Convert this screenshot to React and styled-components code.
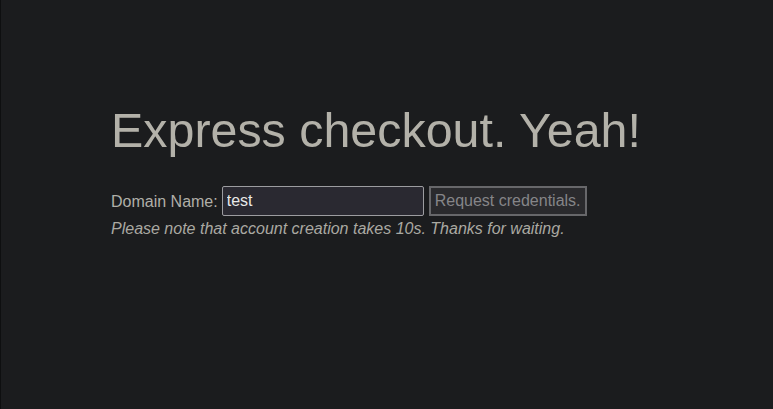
import React, { useState } from "react";
import styled, { createGlobalStyle } from "styled-components";

const GlobalStyle = createGlobalStyle`
  html, body {
    margin: 0;
    padding: 0;
    height: 100%;
    background: #1b1c1e;
  }
  #root {
    height: 100%;
  }
`;

const Page = styled.div`
  box-sizing: border-box;
  min-height: 409px;
  border-left: 1px solid #0e0f10;
  background: #1b1c1e;
  padding: 100px 0 0 110px;
  font-family: "Liberation Sans", Arial, sans-serif;
  color: #aeada6;
`;

const Title = styled.h1`
  margin: 0 0 26px;
  font-size: 48.4px;
  font-weight: 400;
  line-height: 60px;
  color: #b3b1a9;
`;

const Form = styled.form`
  display: flex;
  align-items: center;
  gap: 4px;
  font-size: 16px;
`;

const Label = styled.label`
  color: #b0afa8;
  padding-top: 2px;
`;

const Input = styled.input`
  box-sizing: border-box;
  width: 202px;
  height: 30px;
  padding: 0 4px;
  border: 1px solid #9c9ca0;
  border-radius: 2px;
  background: #2a2931;
  color: #e8e8e8;
  font: 16px "Liberation Sans", Arial, sans-serif;
  outline: none;
`;

const Button = styled.button`
  box-sizing: border-box;
  height: 30px;
  padding: 0 4px;
  margin-left: 1px;
  border: 2px solid #67676a;
  background: #2a2a2d;
  color: #858588;
  font: 16px "Liberation Sans", Arial, sans-serif;
`;

const Note = styled.p`
  margin: 4px 0 0;
  font-size: 16px;
  font-style: italic;
  color: #aaa9a2;
`;

export default function App() {
  const [domain, setDomain] = useState("test");

  return (
    <>
      <GlobalStyle />
      <Page>
        <Title>Express checkout. Yeah!</Title>
        <Form onSubmit={(e) => e.preventDefault()}>
          <Label htmlFor="domain">Domain Name:</Label>
          <Input id="domain" value={domain} onChange={(e) => setDomain(e.target.value)} />
          <Button type="submit" disabled>Request credentials.</Button>
        </Form>
        <Note>Please note that account creation takes 10s. Thanks for waiting.</Note>
      </Page>
    </>
  );
}
